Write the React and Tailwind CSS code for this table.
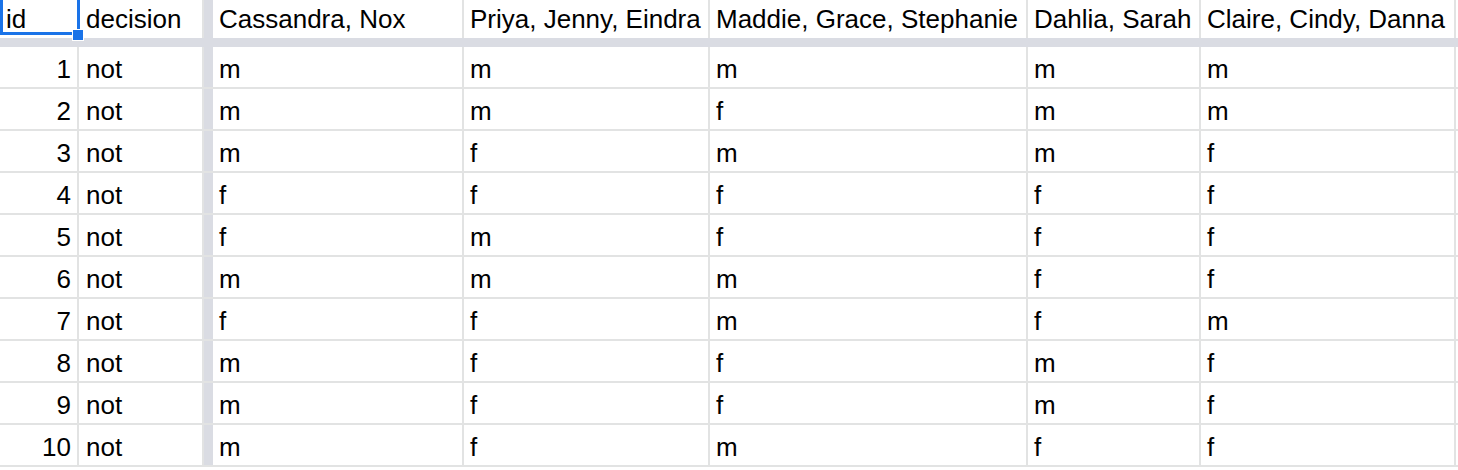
import React from 'react';

const columns = [
  { key: 'c', label: 'Cassandra, Nox', width: 'w-[251px]' },
  { key: 'd', label: 'Priya, Jenny, Eindra', width: 'w-[246px]' },
  { key: 'e', label: 'Maddie, Grace, Stephanie', width: 'w-[318px]' },
  { key: 'f', label: 'Dahlia, Sarah', width: 'w-[173px]' },
  { key: 'g', label: 'Claire, Cindy, Danna', width: 'w-[255px]' },
];

const rows = [
  ['m', 'm', 'm', 'm', 'm'],
  ['m', 'm', 'f', 'm', 'm'],
  ['m', 'f', 'm', 'm', 'f'],
  ['f', 'f', 'f', 'f', 'f'],
  ['f', 'm', 'f', 'f', 'f'],
  ['m', 'm', 'm', 'f', 'f'],
  ['f', 'f', 'm', 'f', 'm'],
  ['m', 'f', 'f', 'm', 'f'],
  ['m', 'f', 'f', 'm', 'f'],
  ['m', 'f', 'm', 'f', 'f'],
];

// cell text sits at the bottom, like Sheets does
const cell = "flex items-end shrink-0 border-r-2 border-[#e2e3e3] leading-[29px] whitespace-nowrap overflow-hidden";

const App = () => {
  return (
    <div className="w-[1458px] h-[470px] overflow-hidden bg-white text-black text-[26px] font-['Liberation_Sans',Arial,sans-serif]">
      {/* header row */}
      <div className="flex h-[38px]">
        <div className={`${cell} relative w-[79px] h-[38px] pb-[4px] pl-[6px] overflow-visible`}>
          id
          <div className="absolute left-0 top-[-6px] w-[80px] h-[41px] border-[3px] border-[#1a73e8]" />
          <div className="absolute left-[72px] top-[29px] w-[12px] h-[12px] bg-[#1a73e8] border border-white z-10" />
        </div>
        <div className={`${cell} w-[125px] h-[38px] pb-[4px] pl-[7px] border-r-0`}>decision</div>
        <div className="w-[9px] h-[38px] shrink-0 bg-[#dadce3]" />
        {columns.map((c) => (
          <div key={c.key} className={`${cell} ${c.width} h-[38px] pb-[4px] pl-[6px]`}>
            {c.label}
          </div>
        ))}
      </div>

      {/* frozen row divider */}
      <div className="h-[9px] w-full bg-[#dadce3]" />

      {rows.map((r, i) => (
        <div key={i} className="flex h-[42px] border-b-2 border-[#e2e3e3]">
          <div className={`${cell} w-[79px] h-[40px] pb-[3px] justify-end pr-[6px]`}>{i + 1}</div>
          <div className={`${cell} w-[125px] h-[40px] pb-[3px] pl-[7px] border-r-0`}>not</div>
          <div className="w-[9px] h-[40px] shrink-0 bg-[#dadce3]" />
          {r.map((v, j) => (
            <div key={j} className={`${cell} ${columns[j].width} h-[40px] pb-[3px] pl-[6px]`}>
              {v}
            </div>
          ))}
        </div>
      ))}
    </div>
  );
};

export default App;
